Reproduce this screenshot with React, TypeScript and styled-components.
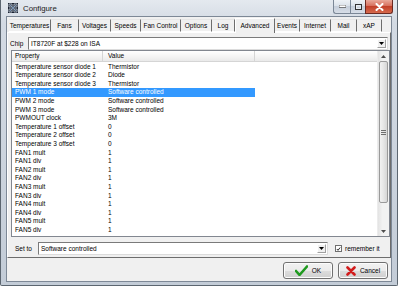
import styled, { createGlobalStyle } from 'styled-components';

const GlobalStyle = createGlobalStyle`
  html, body {
    margin: 0;
    padding: 0;
    background: #ffffff;
  }
  body {
    font-family: "Liberation Sans", Arial, sans-serif;
    font-size: 6.5px;
    color: #000;
  }
`;

const tabs = [
  { label: 'Temperatures', width: 42 },
  { label: 'Fans', width: 28 },
  { label: 'Voltages', width: 32 },
  { label: 'Speeds', width: 30 },
  { label: 'Fan Control', width: 40 },
  { label: 'Options', width: 31 },
  { label: 'Log', width: 23 },
  { label: 'Advanced', width: 40 },
  { label: 'Events', width: 25 },
  { label: 'Internet', width: 31 },
  { label: 'Mail', width: 26 },
  { label: 'xAP', width: 25 },
];

const rows = [
  ['Temperature sensor diode 1', 'Thermistor'],
  ['Temperature sensor diode 2', 'Diode'],
  ['Temperature sensor diode 3', 'Thermistor'],
  ['PWM 1 mode', 'Software controlled'],
  ['PWM 2 mode', 'Software controlled'],
  ['PWM 3 mode', 'Software controlled'],
  ['PWMOUT clock', '3M'],
  ['Temperature 1 offset', '0'],
  ['Temperature 2 offset', '0'],
  ['Temperature 3 offset', '0'],
  ['FAN1 mult', '1'],
  ['FAN1 div', '1'],
  ['FAN2 mult', '1'],
  ['FAN2 div', '1'],
  ['FAN3 mult', '1'],
  ['FAN3 div', '1'],
  ['FAN4 mult', '1'],
  ['FAN4 div', '1'],
  ['FAN5 mult', '1'],
  ['FAN5 div', '1'],
];

const SELECTED = 3;

const AppIcon = () => (
  <svg width="10" height="10" viewBox="0 0 10 10">
    <rect x="0" y="0" width="10" height="10" fill="#1c2433" />
    <path d="M1 1h3v3H1zM6 1h3v3H6zM1 6h3v3H1zM6 6h3v3H6z" fill="none" stroke="#c9d3df" strokeWidth="0.8" />
    <path d="M2 2l6 6M8 2L2 8" stroke="#8fb0d6" strokeWidth="0.8" />
  </svg>
);

const DropArrow = () => (
  <svg width="5" height="3" viewBox="0 0 5 3">
    <path d="M0 0h5L2.5 3z" fill="#000" />
  </svg>
);

const CheckIcon = () => (
  <svg width="13" height="11" viewBox="0 0 13 11">
    <path d="M1 6l3.5 4L12 1.5" fill="none" stroke="#1f9a1f" strokeWidth="2.6" strokeLinecap="round" strokeLinejoin="round" />
  </svg>
);

const CrossIcon = () => (
  <svg width="10" height="10" viewBox="0 0 10 10">
    <path d="M1.5 1.5l7 7M8.5 1.5l-7 7" stroke="#d21c1c" strokeWidth="2.6" strokeLinecap="round" />
  </svg>
);

export default function App() {
  return (
    <>
      <GlobalStyle />
      <Window>
        <TitleBar>
          <AppIcon />
          <Title>Configure</Title>
          <Controls>
            <CtrlButton $w={17}>
              <svg width="7" height="3" viewBox="0 0 7 3">
                <rect x="0" y="0" width="7" height="2.4" fill="#fff" stroke="#333" strokeWidth="0.6" />
              </svg>
            </CtrlButton>
            <CtrlButton $w={15}>
              <svg width="7" height="6" viewBox="0 0 7 6">
                <rect x="0.5" y="0.5" width="6" height="5" fill="none" stroke="#333" strokeWidth="1" />
                <rect x="1.5" y="2" width="4" height="2.5" fill="none" stroke="#fff" strokeWidth="0.6" />
              </svg>
            </CtrlButton>
            <CloseButton>
              <svg width="9" height="8" viewBox="0 0 9 8">
                <path d="M1.5 1l6 6M7.5 1l-6 6" stroke="#fff" strokeWidth="2" strokeLinecap="round" />
              </svg>
            </CloseButton>
          </Controls>
        </TitleBar>
        <Client>
          <TabStrip>
            {tabs.map((t) => (
              <Tab key={t.label} $w={t.width} $active={t.label === 'Advanced'}>
                {t.label}
              </Tab>
            ))}
          </TabStrip>
          <Panel>
            <ChipRow>
              <ChipLabel>Chip</ChipLabel>
              <Combo>
                <ComboText>IT8720F at $228 on ISA</ComboText>
                <ComboButton>
                  <DropArrow />
                </ComboButton>
              </Combo>
            </ChipRow>
            <ListView>
              <ListBody>
                <Header>
                  <HeaderCell $w={91}>Property</HeaderCell>
                  <HeaderCell $w={152}>Value</HeaderCell>
                  <HeaderFill />
                </Header>
                <Rows>
                  {rows.map(([k, v], i) => (
                    <Row key={k} $selected={i === SELECTED}>
                      <KeyCell>{k}</KeyCell>
                      <ValueCell>{v}</ValueCell>
                    </Row>
                  ))}
                </Rows>
              </ListBody>
              <ScrollBar>
                <ScrollArrow>
                  <svg width="5" height="3" viewBox="0 0 5 3">
                    <path d="M0 3h5L2.5 0z" fill="#4d4d4d" />
                  </svg>
                </ScrollArrow>
                <Thumb>
                  <Grip />
                </Thumb>
                <Track />
                <ScrollArrow>
                  <svg width="5" height="3" viewBox="0 0 5 3">
                    <path d="M0 0h5L2.5 3z" fill="#4d4d4d" />
                  </svg>
                </ScrollArrow>
              </ScrollBar>
            </ListView>
            <SetRow>
              <SetLabel>Set to</SetLabel>
              <Combo $w={290}>
                <ComboText>Software controlled</ComboText>
                <ComboButton>
                  <DropArrow />
                </ComboButton>
              </Combo>
              <CheckBox>
                <svg width="6" height="6" viewBox="0 0 6 6">
                  <path d="M1 3l1.4 1.6L5 1.2" fill="none" stroke="#000" strokeWidth="1" />
                </svg>
              </CheckBox>
              <CheckLabel>remember it</CheckLabel>
            </SetRow>
          </Panel>
          <Footer>
            <Button>
              <CheckIcon />
              <span>OK</span>
            </Button>
            <Button>
              <CrossIcon />
              <span>Cancel</span>
            </Button>
          </Footer>
        </Client>
      </Window>
    </>
  );
}

const Window = styled.div`
  box-sizing: border-box;
  width: 398px;
  height: 286px;
  display: flex;
  flex-direction: column;
  padding: 0 5px 3px;
  border: 1px solid #5c6670;
  border-top: none;
  border-radius: 0 0 2px 2px;
  background: linear-gradient(180deg, #e4e9ef 0%, #d3dae3 8%, #cbd3dd 60%, #c3ccd7 100%);
`;

const TitleBar = styled.div`
  height: 16px;
  display: flex;
  align-items: center;
  gap: 5px;
  padding-left: 2px;
`;

const Title = styled.div`
  font-size: 7.8px;
  color: #1a1a1a;
`;

const Controls = styled.div`
  margin-left: auto;
  margin-right: -1px;
  align-self: flex-start;
  display: flex;
`;

const CtrlButton = styled.div<{ $w: number }>`
  box-sizing: border-box;
  width: ${(p) => p.$w}px;
  height: 14px;
  display: flex;
  align-items: center;
  justify-content: center;
  border: 1px solid #7b8796;
  border-top: none;
  border-right: none;
  background: linear-gradient(180deg, #eef2f6 0%, #dbe2ea 45%, #c5ceda 50%, #d7dee7 100%);
  &:first-child {
    border-bottom-left-radius: 3px;
  }
`;

const CloseButton = styled.div`
  box-sizing: border-box;
  width: 28px;
  height: 14px;
  display: flex;
  align-items: center;
  justify-content: center;
  border: 1px solid #6b2a22;
  border-top: none;
  border-bottom-right-radius: 3px;
  background: linear-gradient(180deg, #e9a99b 0%, #d7705d 45%, #c2402a 50%, #d66a4c 100%);
`;

const Client = styled.div`
  flex: 1;
  display: flex;
  flex-direction: column;
  border: 1px solid #7d8896;
  background: #f0f0f0;
`;

const TabStrip = styled.div`
  height: 15px;
  display: flex;
  align-items: flex-end;
  padding-left: 2px;
`;

const Tab = styled.div<{ $w: number; $active?: boolean }>`
  box-sizing: border-box;
  width: ${(p) => p.$w}px;
  height: ${(p) => (p.$active ? 15 : 13)}px;
  display: flex;
  align-items: center;
  justify-content: center;
  padding-bottom: ${(p) => (p.$active ? 1 : 0)}px;
  white-space: nowrap;
  background: #f0f0f0;
  border-top: 1px solid ${(p) => (p.$active ? '#ffffff' : '#e6e6e6')};
  border-left: ${(p) => (p.$active ? '1px solid #ffffff' : 'none')};
  border-right: 1px solid #6d6d6d;
  border-bottom: ${(p) => (p.$active ? 'none' : '1px solid #ffffff')};
  margin-bottom: ${(p) => (p.$active ? -1 : 0)}px;
  position: relative;
`;

const Panel = styled.div`
  box-sizing: border-box;
  height: 226px;
  display: flex;
  flex-direction: column;
  padding-top: 4px;
  border-top: 1px solid #ffffff;
  border-left: 1px solid #ffffff;
  border-right: 1px solid #6d6d6d;
  border-bottom: 1px solid #6d6d6d;
`;

const ChipRow = styled.div`
  height: 13px;
  display: flex;
  align-items: center;
  padding: 0 2px 0 2px;
`;

const ChipLabel = styled.div`
  width: 18px;
`;

const Combo = styled.div<{ $w?: number }>`
  box-sizing: border-box;
  height: 13px;
  ${(p) => (p.$w ? `width: ${p.$w}px;` : 'flex: 1;')}
  display: flex;
  align-items: center;
  background: #ffffff;
  border: 1px solid #7a7a7a;
  border-right-color: #dcdcdc;
  border-bottom-color: #dcdcdc;
`;

const ComboText = styled.div`
  flex: 1;
  padding-left: 2px;
  white-space: nowrap;
`;

const ComboButton = styled.div`
  box-sizing: border-box;
  width: 9px;
  height: 9px;
  margin-right: 1px;
  display: flex;
  align-items: center;
  justify-content: center;
  background: #f0f0f0;
  border: 1px solid #a0a0a0;
  border-top-color: #ffffff;
  border-left-color: #ffffff;
`;

const ListView = styled.div`
  box-sizing: border-box;
  height: 187px;
  margin: 0 0 0 3px;
  display: flex;
  background: #ffffff;
  border: 1px solid #828790;
`;

const ListBody = styled.div`
  flex: 1;
  display: flex;
  flex-direction: column;
`;

const Header = styled.div`
  height: 10px;
  display: flex;
  background: linear-gradient(180deg, #ffffff 0%, #f3f3f3 60%, #e9e9e9 100%);
  border-bottom: 1px solid #d5d5d5;
`;

const HeaderCell = styled.div<{ $w: number }>`
  box-sizing: border-box;
  width: ${(p) => p.$w}px;
  padding-left: ${(p) => (p.$w < 100 ? 3 : 5)}px;
  line-height: 10px;
  border-right: 1px solid #d5d5d5;
  white-space: nowrap;
`;

const HeaderFill = styled.div`
  flex: 1;
`;

const Rows = styled.div`
  padding-top: 0.7px;
  display: flex;
  flex-direction: column;
`;

const Row = styled.div<{ $selected?: boolean }>`
  width: 243px;
  height: 8.6px;
  line-height: 8.6px;
  display: flex;
  white-space: nowrap;
  background: ${(p) => (p.$selected ? '#3399ff' : 'transparent')};
  color: ${(p) => (p.$selected ? '#ffffff' : '#000000')};
`;

const KeyCell = styled.div`
  width: 91px;
  padding-left: 3px;
  box-sizing: border-box;
`;

const ValueCell = styled.div`
  width: 152px;
  padding-left: 5px;
  box-sizing: border-box;
`;

const ScrollBar = styled.div`
  width: 11px;
  display: flex;
  flex-direction: column;
  background: linear-gradient(90deg, #e3e3e3 0%, #f2f2f2 40%, #f2f2f2 100%);
  border-left: 1px solid #ececec;
`;

const ScrollArrow = styled.div`
  height: 10px;
  display: flex;
  align-items: center;
  justify-content: center;
`;

const Thumb = styled.div`
  height: 140px;
  margin: 0 1px;
  display: flex;
  align-items: center;
  justify-content: center;
  border: 1px solid #9a9a9a;
  border-radius: 2px;
  background: linear-gradient(90deg, #f2f2f2 0%, #e6e6e6 50%, #d6d6d6 100%);
`;

const Grip = styled.div`
  width: 5px;
  height: 3px;
  border-top: 1px solid #6e6e6e;
  border-bottom: 1px solid #6e6e6e;
  position: relative;
  &::after {
    content: '';
    position: absolute;
    left: 0;
    right: 0;
    top: 1px;
    border-top: 1px solid #6e6e6e;
  }
`;

const Track = styled.div`
  flex: 1;
`;

const SetRow = styled.div`
  height: 13px;
  margin-top: 5px;
  display: flex;
  align-items: center;
  padding-left: 7px;
`;

const SetLabel = styled.div`
  width: 23px;
`;

const CheckBox = styled.div`
  box-sizing: border-box;
  width: 7px;
  height: 7px;
  margin-left: 7px;
  display: flex;
  align-items: center;
  justify-content: center;
  background: #ffffff;
  border: 1px solid #6f6f6f;
`;

const CheckLabel = styled.div`
  margin-left: 3px;
  white-space: nowrap;
`;

const Footer = styled.div`
  display: flex;
  justify-content: flex-end;
  gap: 5px;
  padding: 4px 3px 0 0;
`;

const Button = styled.div`
  box-sizing: border-box;
  width: 50px;
  height: 17px;
  display: flex;
  align-items: center;
  justify-content: center;
  gap: 4px;
  border: 1px solid #707070;
  border-radius: 3px;
  background: linear-gradient(180deg, #f2f2f2 0%, #ebebeb 50%, #dddddd 51%, #cfcfcf 100%);
  box-shadow: inset 0 0 0 1px #fcfcfc;
`;
